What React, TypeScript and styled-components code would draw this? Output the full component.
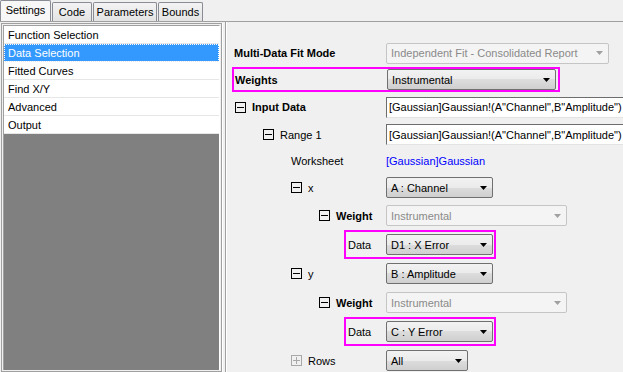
import styled, { createGlobalStyle } from "styled-components";

const GlobalStyle = createGlobalStyle`
  html, body {
    margin: 0;
    padding: 0;
    background: #f0f0f0;
  }
  body {
    font-family: "Liberation Sans", Arial, sans-serif;
    font-size: 11px;
    color: #000;
  }
`;

const Window = styled.div`
  width: 623px;
  height: 372px;
  overflow: hidden;
  display: flex;
  flex-direction: column;
  background: #f0f0f0;
`;

const TabBar = styled.div`
  display: flex;
  align-items: flex-end;
  height: 21px;
  flex-shrink: 0;
`;

const Tab = styled.div<{ $w: number; $active?: boolean }>`
  box-sizing: border-box;
  width: ${(p) => p.$w}px;
  height: ${(p) => (p.$active ? 21 : 19)}px;
  margin-right: 1px;
  display: flex;
  align-items: center;
  justify-content: center;
  padding-bottom: ${(p) => (p.$active ? 2 : 0)}px;
  border: 1px solid #898c95;
  border-bottom: none;
  border-radius: 2px 2px 0 0;
  background: ${(p) =>
    p.$active ? "#f7f7f7" : "linear-gradient(#f3f3f3, #e3e3e3)"};
`;

const Body = styled.div`
  flex: 1;
  display: flex;
  border-top: 1px solid #a0a0a0;
  min-height: 0;
`;

const LeftPane = styled.div`
  box-sizing: border-box;
  width: 221px;
  margin-left: 1px;
  margin-top: 1px;
  padding: 1px;
  border: 1px solid #a0a0a0;
  border-right-color: #a0a0a0;
  box-shadow: 1px 0 0 #fff;
  display: flex;
`;

const ListBox = styled.div`
  flex: 1;
  background: #808080;
  border-top: 1px solid #a0a0a0;
  border-left: 1px solid #a0a0a0;
  border-right: 1px solid #fff;
`;

const ListItem = styled.div<{ $selected?: boolean }>`
  box-sizing: border-box;
  height: 18px;
  display: flex;
  align-items: center;
  padding-left: 4px;
  background: ${(p) => (p.$selected ? "#3399ff" : "#fff")};
  color: ${(p) => (p.$selected ? "#fff" : "#000")};
  border-bottom: 1px solid #e6e6e6;
  outline: ${(p) => (p.$selected ? "1px dotted #fff" : "none")};
  outline-offset: -1px;
`;

const RightPane = styled.div`
  flex: 1;
  margin-left: 3px;
  border-left: 1px solid #a0a0a0;
  box-shadow: inset 1px 0 0 #fff;
  padding-top: 18px;
  overflow: hidden;
  display: flex;
  flex-direction: column;
`;

const Row = styled.div<{ $h: number }>`
  height: ${(p) => p.$h}px;
  display: flex;
  align-items: center;
  flex-shrink: 0;
`;

const LabelCell = styled.div<{ $indent: number; $bold?: boolean }>`
  box-sizing: border-box;
  width: 160px;
  padding-left: ${(p) => p.$indent}px;
  display: flex;
  align-items: center;
  gap: 6px;
  font-weight: ${(p) => (p.$bold ? 700 : 400)};
  white-space: nowrap;
  flex-shrink: 0;
`;

const Highlight = styled.div<{ $left: number; $label: number; $pad: string }>`
  display: flex;
  align-items: center;
  margin-left: ${(p) => p.$left}px;
  padding: ${(p) => p.$pad};
  border: 2px solid #ff00ff;

  & > ${LabelCell} {
    width: ${(p) => p.$label}px;
  }
`;

const Combo = styled.div<{ $w: number; $disabled?: boolean }>`
  box-sizing: border-box;
  width: ${(p) => p.$w}px;
  height: 21px;
  flex-shrink: 0;
  display: flex;
  align-items: center;
  justify-content: space-between;
  padding: 0 5px 0 4px;
  border: 1px solid ${(p) => (p.$disabled ? "#c5c5c5" : "#707070")};
  border-radius: 2px;
  background: ${(p) =>
    p.$disabled
      ? "#f4f4f4"
      : "linear-gradient(#f2f2f2 0%, #ebebeb 50%, #dddddd 50%, #cfcfcf 100%)"};
  color: ${(p) => (p.$disabled ? "#8a8a8a" : "#000")};
  white-space: nowrap;
`;

const TextField = styled.div`
  box-sizing: border-box;
  width: 250px;
  height: 21px;
  flex-shrink: 0;
  display: flex;
  align-items: center;
  padding-left: 2px;
  background: #fff;
  border: 1px solid;
  border-color: #6d6d6d #e3e3e3 #e3e3e3 #6d6d6d;
  white-space: nowrap;
`;

const Link = styled.span`
  color: #0000ff;
`;

function Arrow({ disabled }: { disabled?: boolean }) {
  return (
    <svg width="7" height="4" viewBox="0 0 7 4">
      <polygon points="0,0 7,0 3.5,4" fill={disabled ? "#a0a0a0" : "#000"} />
    </svg>
  );
}

function Toggle({ collapsed }: { collapsed?: boolean }) {
  const c = collapsed ? "#a8a8a8" : "#000";
  return (
    <svg width="11" height="11" viewBox="0 0 11 11">
      <rect x="0.5" y="0.5" width="10" height="10" fill="none" stroke={c} />
      <line x1="2" y1="5.5" x2="9" y2="5.5" stroke={c} />
      {collapsed && <line x1="5.5" y1="2" x2="5.5" y2="9" stroke={c} />}
    </svg>
  );
}

function Select({ w, text, disabled }: { w: number; text: string; disabled?: boolean }) {
  return (
    <Combo $w={w} $disabled={disabled}>
      <span>{text}</span>
      <Arrow disabled={disabled} />
    </Combo>
  );
}

const pages = [
  "Function Selection",
  "Data Selection",
  "Fitted Curves",
  "Find X/Y",
  "Advanced",
  "Output",
];

export default function App() {
  return (
    <Window>
      <GlobalStyle />
      <TabBar>
        <Tab $w={51} $active>
          Settings
        </Tab>
        <Tab $w={40}>Code</Tab>
        <Tab $w={64}>Parameters</Tab>
        <Tab $w={45}>Bounds</Tab>
      </TabBar>
      <Body>
        <LeftPane>
          <ListBox>
            {pages.map((p) => (
              <ListItem key={p} $selected={p === "Data Selection"}>
                {p}
              </ListItem>
            ))}
          </ListBox>
        </LeftPane>
        <RightPane>
          <Row $h={26}>
            <LabelCell $indent={8} $bold>
              Multi-Data Fit Mode
            </LabelCell>
            <Select w={223} text="Independent Fit - Consolidated Report" disabled />
          </Row>
          <Row $h={27}>
            <Highlight $left={6} $label={152} $pad="0 2px 0 0">
              <LabelCell $indent={1} $bold>
                Weights
              </LabelCell>
              <div style={{ marginLeft: 1 }}>
                <Select w={169} text="Instrumental" />
              </div>
            </Highlight>
          </Row>
          <Row $h={28}>
            <LabelCell $indent={9} $bold>
              <Toggle />
              Input Data
            </LabelCell>
            <TextField>[Gaussian]Gaussian!(A"Channel",B"Amplitude")</TextField>
          </Row>
          <Row $h={27}>
            <LabelCell $indent={37}>
              <Toggle />
              Range 1
            </LabelCell>
            <TextField>[Gaussian]Gaussian!(A"Channel",B"Amplitude")</TextField>
          </Row>
          <Row $h={26}>
            <LabelCell $indent={65}>Worksheet</LabelCell>
            <Link>[Gaussian]Gaussian</Link>
          </Row>
          <Row $h={27}>
            <LabelCell $indent={65}>
              <Toggle />x
            </LabelCell>
            <Select w={107} text="A : Channel" />
          </Row>
          <Row $h={29}>
            <LabelCell $indent={93} $bold>
              <Toggle />
              Weight
            </LabelCell>
            <Select w={181} text="Instrumental" disabled />
          </Row>
          <Row $h={29}>
            <Highlight $left={118} $label={40} $pad="2px 1px 2px 0">
              <LabelCell $indent={2}>Data</LabelCell>
              <Select w={107} text="D1 : X Error" />
            </Highlight>
          </Row>
          <Row $h={29}>
            <LabelCell $indent={65}>
              <Toggle />y
            </LabelCell>
            <Select w={107} text="B : Amplitude" />
          </Row>
          <Row $h={29}>
            <LabelCell $indent={93} $bold>
              <Toggle />
              Weight
            </LabelCell>
            <Select w={181} text="Instrumental" disabled />
          </Row>
          <Row $h={29}>
            <Highlight $left={118} $label={40} $pad="2px 1px 2px 0">
              <LabelCell $indent={2}>Data</LabelCell>
              <Select w={107} text="C : Y Error" />
            </Highlight>
          </Row>
          <Row $h={29}>
            <LabelCell $indent={65}>
              <Toggle collapsed />
              Rows
            </LabelCell>
            <Select w={82} text="All" />
          </Row>
        </RightPane>
      </Body>
    </Window>
  );
}
